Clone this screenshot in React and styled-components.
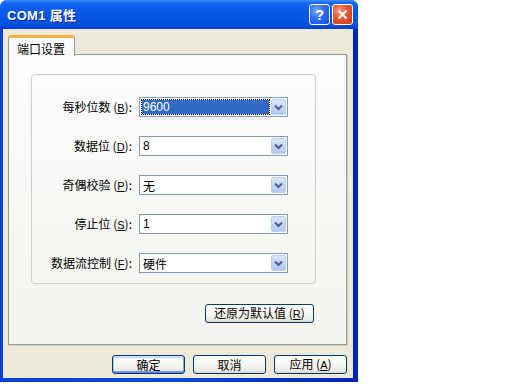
import React from 'react';
import styled, { createGlobalStyle } from 'styled-components';

const GlobalStyle = createGlobalStyle`
    html, body {
        margin: 0;
        padding: 0;
        background: #ffffff;
    }

    body {
        font-family: "Noto Sans CJK SC", "Liberation Sans", sans-serif;
        font-size: 12px;
        color: #000;
    }
`;

const Window = styled.div`
    width: 358px;
    height: 382px;
    display: flex;
    flex-direction: column;
    background: linear-gradient(to right, #0840d8 0%, #0a46dc 50%, #0024b8 100%);
    border-radius: 7px 7px 0 0;
    overflow: hidden;
`;

const TitleBar = styled.div`
    height: 29px;
    flex: none;
    display: flex;
    align-items: center;
    gap: 2px;
    padding: 0 5px 0 7px;
    background: linear-gradient(to bottom, #3d8ff8 0%, #0f64ee 12%, #0758e8 45%, #0453e2 80%, #0043cc 100%);
`;

const Title = styled.div`
    flex: 1;
    color: #ffffff;
    font-family: "Liberation Sans", "Noto Sans CJK SC", sans-serif;
    font-weight: bold;
    font-size: 13px;
    text-shadow: 1px 1px 0 #0a1e8a;
    letter-spacing: 0.3px;
`;

const CaptionButton = styled.div`
    width: 21px;
    height: 21px;
    box-sizing: border-box;
    border: 1px solid #ffffff;
    border-radius: 3px;
    display: flex;
    align-items: center;
    justify-content: center;
    color: #ffffff;
    font-family: "Liberation Sans", sans-serif;
    font-weight: bold;
    font-size: 15px;
    background: ${p => p.close
        ? 'radial-gradient(circle at 35% 30%, #f39a7c 0%, #e5582f 45%, #c83a12 100%)'
        : 'radial-gradient(circle at 35% 30%, #7aa8ff 0%, #2c6cf0 45%, #1a4ed8 100%)'};
`;

const Body = styled.div`
    flex: 1;
    margin: 0 5px 4px 3px;
    background: #ece9d8;
    display: flex;
    flex-direction: column;
    padding: 6px 6px 4px 5px;
`;

const TabStrip = styled.div`
    display: flex;
    position: relative;
    z-index: 1;
    margin-bottom: -2px;
`;

const Tab = styled.div`
    height: 21px;
    box-sizing: border-box;
    padding: 3px 9px 0 8px;
    border: 1px solid #919b9c;
    border-bottom: none;
    border-top: 3px solid #f6b23a;
    border-radius: 3px 3px 0 0;
    background: #fcfcfe;
    font-size: 12px;
    line-height: 15px;
`;

const Panel = styled.div`
    flex: 1;
    border: 1px solid #919b9c;
    background: linear-gradient(to bottom, #fcfcfe 0%, #f7f6f2 70%, #f4f3ee 100%);
    padding: 19px 0 0 22px;
    display: flex;
    flex-direction: column;
    box-shadow: 1px 1px 0 #d4d0c8;
`;

const GroupBox = styled.div`
    width: 285px;
    height: 210px;
    box-sizing: border-box;
    border: 1px solid #d0d0bf;
    border-radius: 4px;
    padding-top: 22px;
    display: grid;
    grid-template-columns: 100px 149px;
    grid-auto-rows: 20px;
    column-gap: 7px;
    row-gap: 19px;
    align-content: start;
`;

const Label = styled.div`
    text-align: right;
    line-height: 20px;
    font-size: 12px;
    white-space: nowrap;

    u {
        font-family: "Liberation Sans", sans-serif;
        font-size: 11px;
    }
`;

const Combo = styled.div`
    height: 20px;
    box-sizing: border-box;
    border: 1px solid #7f9db9;
    background: #ffffff;
    display: flex;
    align-items: stretch;
    padding: 1px;
`;

const ComboValue = styled.div`
    flex: 1;
    margin: 1px 2px 1px 1px;
    padding-left: 1px;
    display: flex;
    align-items: center;
    font-family: "Liberation Sans", "Noto Sans CJK SC", sans-serif;
    font-size: 12px;
    color: ${p => p.selected ? '#ffffff' : '#000000'};
    background: ${p => p.selected ? '#316ac5' : 'transparent'};
    outline: ${p => p.selected ? '1px dotted #000' : 'none'};
`;

const ComboArrow = styled.div`
    width: 15px;
    flex: none;
    box-sizing: border-box;
    border: 1px solid #bccbf0;
    border-radius: 2px;
    background: linear-gradient(to bottom, #dce6fc 0%, #c4d4fb 50%, #b4c8f6 100%);
    display: flex;
    align-items: center;
    justify-content: center;
`;

const ResetRow = styled.div`
    width: 285px;
    display: flex;
    justify-content: flex-end;
    margin-top: 20px;
`;

const Button = styled.button`
    height: 19px;
    width: ${p => p.width || 73}px;
    box-sizing: border-box;
    margin-right: ${p => p.inset || 0}px;
    border: 1px solid #003c74;
    border-radius: 3px;
    padding: 0;
    background: linear-gradient(to bottom, #ffffff 0%, #f5f4ef 60%, #e8e6dc 90%, #d6d0c5 100%);
    font-family: "Noto Sans CJK SC", "Liberation Sans", sans-serif;
    font-size: 12px;
    line-height: 15px;
    color: #000;
    box-shadow: ${p => p.primary
        ? 'inset 0 1px 0 #cee7ff, inset 0 -1px 0 #6982ee, inset 1px 0 0 #b2cffa, inset -1px 0 0 #89ade4, inset 0 2px 0 #bcd4f6, inset 0 -2px 0 #7d99e8'
        : 'none'};

    u {
        font-family: "Liberation Sans", sans-serif;
        font-size: 11px;
    }
`;

const ButtonRow = styled.div`
    display: flex;
    justify-content: flex-end;
    gap: 8px;
    margin-top: 10px;
`;

const Chevron = () => (
    <svg width="9" height="7" viewBox="0 0 9 7">
        <path d="M1 1.5 L4.5 5 L8 1.5" fill="none" stroke="#4d6185" strokeWidth="2" />
    </svg>
);

const CloseIcon = () => (
    <svg width="11" height="11" viewBox="0 0 11 11">
        <path d="M1.5 1.5 L9.5 9.5 M9.5 1.5 L1.5 9.5" stroke="#ffffff" strokeWidth="2" />
    </svg>
);

const fields = [
    { label: '每秒位数', key: 'B', value: '9600', selected: true },
    { label: '数据位', key: 'D', value: '8' },
    { label: '奇偶校验', key: 'P', value: '无' },
    { label: '停止位', key: 'S', value: '1' },
    { label: '数据流控制', key: 'F', value: '硬件' },
];

const App = () => (
    <>
        <GlobalStyle />
        <Window>
            <TitleBar>
                <Title>COM1 属性</Title>
                <CaptionButton>?</CaptionButton>
                <CaptionButton close><CloseIcon /></CaptionButton>
            </TitleBar>
            <Body>
                <TabStrip>
                    <Tab>端口设置</Tab>
                </TabStrip>
                <Panel>
                    <GroupBox>
                        {fields.map(f => (
                            <React.Fragment key={f.key}>
                                <Label>{f.label} (<u>{f.key}</u>):</Label>
                                <Combo>
                                    <ComboValue selected={f.selected}>{f.value}</ComboValue>
                                    <ComboArrow><Chevron /></ComboArrow>
                                </Combo>
                            </React.Fragment>
                        ))}
                    </GroupBox>
                    <ResetRow>
                        <Button width={109} inset={2}>还原为默认值 (<u>R</u>)</Button>
                    </ResetRow>
                </Panel>
                <ButtonRow>
                    <Button primary>确定</Button>
                    <Button>取消</Button>
                    <Button>应用 (<u>A</u>)</Button>
                </ButtonRow>
            </Body>
        </Window>
    </>
);

export default App;
